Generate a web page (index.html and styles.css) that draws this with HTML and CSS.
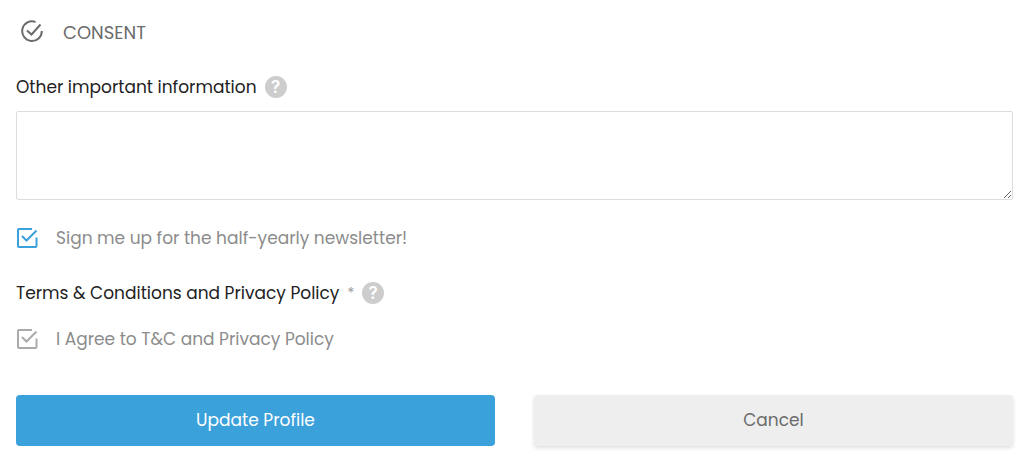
FILE: index.html
```
<!DOCTYPE html>
<html lang="en">
<head>
<meta charset="utf-8">
<meta name="viewport" content="width=device-width, initial-scale=1">
<title>Update Profile</title>
<link rel="stylesheet" href="styles.css">
</head>
<body>
<form class="profile-form">
  <h2 class="section-title">
    <svg class="section-icon" viewBox="0 0 22 22" aria-hidden="true"><path d="M14.5 2A9.8 9.8 0 1 0 20.8 11"/><path d="M6 10.5L10.5 14.5L19.5 4.5"/></svg>
    <span>CONSENT</span>
  </h2>

  <div class="label-row">
    <label for="other-info">Other important information</label>
    <button class="help" type="button" aria-label="Help: other information"><span>?</span></button>
  </div>
  <textarea class="text-area" id="other-info"></textarea>

  <label class="check-row">
    <input class="check-input" type="checkbox" checked>
    <svg class="check-icon active" viewBox="0 0 22 22" aria-hidden="true"><path d="M16 2H3Q2 2 2 3V19Q2 20 3 20H19.5Q20.5 20 20.5 19V10.5"/><path d="M6 9L10.5 13.5L20.5 3.5"/></svg>
    <span>Sign me up for the half-yearly newsletter!</span>
  </label>

  <div class="label-row">
    <span id="terms-label">Terms &amp; Conditions and Privacy Policy</span>
    <span class="required">*</span>
    <button class="help" type="button" aria-label="Help: terms"><span>?</span></button>
  </div>
  <label class="check-row">
    <input class="check-input" type="checkbox" checked aria-describedby="terms-label">
    <svg class="check-icon" viewBox="0 0 22 22" aria-hidden="true"><path d="M16 2H3Q2 2 2 3V19Q2 20 3 20H19.5Q20.5 20 20.5 19V10.5"/><path d="M6 9L10.5 13.5L20.5 3.5"/></svg>
    <span>I Agree to T&amp;C and Privacy Policy</span>
  </label>

  <div class="actions">
    <button class="button primary" type="submit">Update Profile</button>
    <button class="button secondary" type="button">Cancel</button>
  </div>
</form>
</body>
</html>
```

FILE: styles.css
```
* {
  box-sizing: border-box;
}

body {
  margin: 0;
  background: #fff;
  color: #222;
  font: 17px/24px Poppins, Inter, sans-serif;
}

.profile-form {
  padding: 19px 11px 16px 16px;
}

.section-title {
  display: flex;
  align-items: center;
  gap: 20px;
  height: 28px;
  margin: 0 0 28px;
  padding-left: 5px;
  color: #6b6b6b;
  font-size: 18px;
  font-weight: 400;
}

.section-icon,
.check-icon {
  flex: none;
  fill: none;
  stroke: currentColor;
  stroke-width: 2;
}

.section-icon {
  width: 22px;
  height: 22px;
  margin-top: -4px;
}

.label-row {
  display: flex;
  align-items: center;
  gap: 8px;
  height: 24px;
  margin-bottom: 12px;
}

.required {
  color: #999;
  font-size: 14px;
}

.help {
  display: grid;
  place-items: center;
  width: 22px;
  height: 22px;
  padding: 0;
  border: 0;
  border-radius: 50%;
  background: #cdcdcd;
  color: #fff;
  font: 600 17px/22px Inter, sans-serif;
}

.text-area {
  display: block;
  width: 100%;
  height: 89px;
  margin-bottom: 26px;
  padding: 12px;
  border: 1px solid #ddd;
  border-radius: 2px;
  background: #fff;
  color: #666;
  font: inherit;
  resize: vertical;
}

.check-row {
  position: relative;
  display: flex;
  align-items: center;
  gap: 18px;
  height: 24px;
  margin: 22px 0 31px;
  color: #8c8c8c;
}

.check-input {
  position: absolute;
  width: 22px;
  height: 22px;
  margin: 0;
  opacity: 0;
}

.check-icon {
  width: 22px;
  height: 22px;
  color: #aaa;
}

.check-icon.active {
  color: #3ba1da;
}

.actions {
  display: grid;
  grid-template-columns: 1fr 1fr;
  gap: 39px;
  margin-top: 44px;
}

.button {
  height: 51px;
  padding: 0 12px 2px;
  border: 0;
  border-radius: 4px;
  font: inherit;
}

.primary {
  background: #3ba1da;
  color: #fff;
}

.secondary {
  background: #eee;
  color: #6b6b6b;
  box-shadow: 0 2px 4px #0002;
}
```
